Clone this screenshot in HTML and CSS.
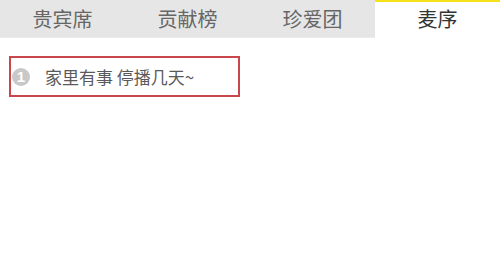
FILE: index.html
```html
<!DOCTYPE html>
<html lang="zh">
<head>
  <meta charset="UTF-8" />
  <title>麦序</title>
  <link rel="stylesheet" href="styles.css">
</head>
<body>
  <div class="tabs">
    <div class="tab">贵宾席</div>
    <div class="tab">贡献榜</div>
    <div class="tab">珍爱团</div>
    <div class="tab active">麦序</div>
  </div>

  <div class="mic-list">
    <div class="mic-item">
      <span class="num">1</span>
      <span class="note">家里有事 停播几天~</span>
    </div>
  </div>
</body>
</html>
```

FILE: styles.css
```css
body {
  margin: 0;
  font-family: "Noto Sans CJK SC", "Noto Sans", sans-serif;
  background: #fff;
  color: #555;
}
.tabs {
  display: flex;
  height: 38px;
  background: #e6e6e6;
  border-bottom: 1px solid #ececec;
  box-sizing: border-box;
}
.tab {
  flex: 1;
  text-align: center;
  font-size: 20px;
  line-height: 38px;
  color: #666;
}
.tab.active {
  background: #fff;
  color: #333;
  border-top: 2px solid #f5e21a;
  line-height: 34px;
  margin-bottom: -1px;
}
.mic-list {
  padding: 18px 0 0 9px;
}
.mic-item {
  display: flex;
  align-items: center;
  width: 231px;
  height: 41px;
  box-sizing: border-box;
  border: 2px solid #c9474b;
  padding-left: 1px;
}
.num {
  width: 18px;
  height: 18px;
  border-radius: 50%;
  background: #c8c8c8;
  color: #fff;
  font-size: 15px;
  font-weight: bold;
  line-height: 18px;
  text-align: center;
  font-family: "Liberation Sans", sans-serif;
}
.note {
  margin-left: 15px;
  font-size: 17px;
  color: #5a5a5a;
}
```
